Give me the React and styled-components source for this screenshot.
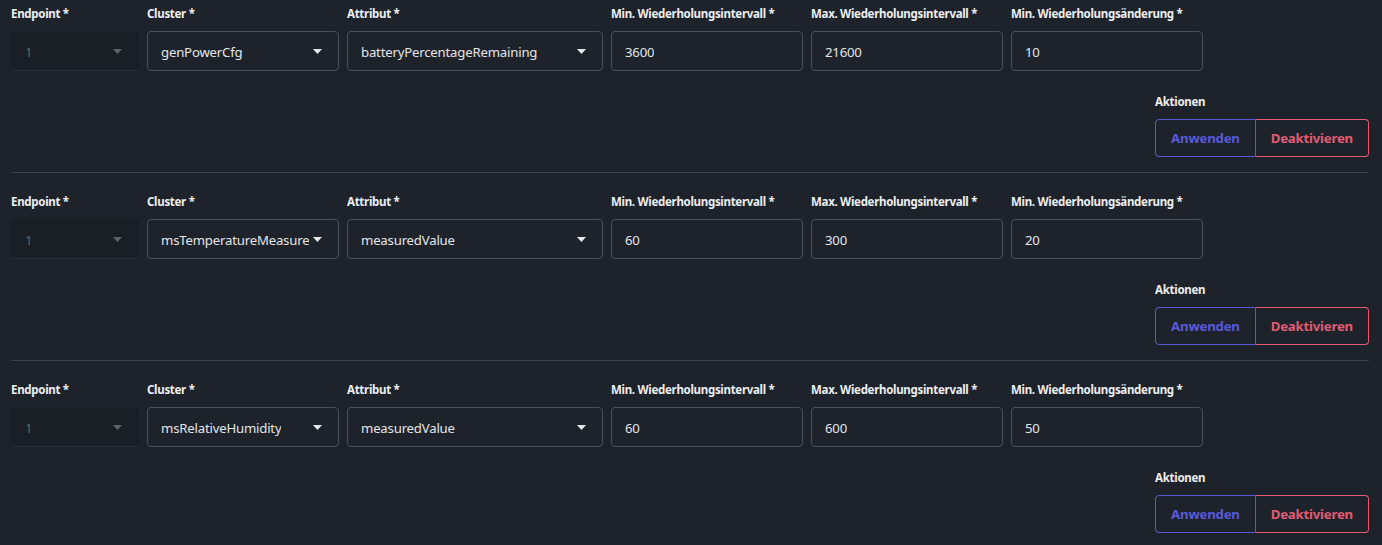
import React from "react";
import styled, { createGlobalStyle } from "styled-components";

const GlobalStyle = createGlobalStyle`
  body {
    margin: 0;
    background: #1e232b;
    font-family: "Noto Sans", "Open Sans", sans-serif;
  }
`;

const rows = [
    { cluster: "genPowerCfg", attribute: "batteryPercentageRemaining", min: "3600", max: "21600", change: "10" },
    { cluster: "msTemperatureMeasurement", attribute: "measuredValue", min: "60", max: "300", change: "20" },
    { cluster: "msRelativeHumidity", attribute: "measuredValue", min: "60", max: "600", change: "50" },
];

const Arrow = ({ muted }) => (
    <svg width="9" height="5" viewBox="0 0 9 5">
        <path d="M0 0 L9 0 L4.5 5 Z" fill={muted ? "#5d6269" : "#e6e8ea"} />
    </svg>
);

const App = () => {
    return (
        <Page>
            <GlobalStyle />
            {rows.map((row, i) => (
                <Section key={i} $last={i === rows.length - 1}>
                    <Fields>
                        <Field $w={128}>
                            <Label>Endpoint *</Label>
                            <Select $disabled>
                                <Value $muted>1</Value>
                                <Arrow muted />
                            </Select>
                        </Field>
                        <Field $w={192}>
                            <Label>Cluster *</Label>
                            <Select>
                                <Value>{row.cluster}</Value>
                                <Arrow />
                            </Select>
                        </Field>
                        <Field $w={256}>
                            <Label>Attribut *</Label>
                            <Select>
                                <Value>{row.attribute}</Value>
                                <Arrow />
                            </Select>
                        </Field>
                        <Field $w={192}>
                            <Label>Min. Wiederholungsintervall *</Label>
                            <Input><Value>{row.min}</Value></Input>
                        </Field>
                        <Field $w={192}>
                            <Label>Max. Wiederholungsintervall *</Label>
                            <Input><Value>{row.max}</Value></Input>
                        </Field>
                        <Field $w={192}>
                            <Label>Min. Wiederholungsänderung *</Label>
                            <Input><Value>{row.change}</Value></Input>
                        </Field>
                    </Fields>
                    <Actions>
                        <Label>Aktionen</Label>
                        <ButtonGroup>
                            <Button $color="#5a5ad8" $left>Anwenden</Button>
                            <Button $color="#e25b72">Deaktivieren</Button>
                        </ButtonGroup>
                    </Actions>
                </Section>
            ))}
        </Page>
    );
};

//styling
const Page = styled.div`
padding: 6px 13px 0 11px;
`
const Section = styled.div`
display: flex;
flex-direction: column;
padding-bottom: 15px;
margin-bottom: 21px;
border-bottom: ${p => p.$last ? "none" : "1px solid #3b4048"};
`
const Fields = styled.div`
display: flex;
gap: 8px;
`
const Field = styled.div`
display: flex;
flex-direction: column;
width: ${p => p.$w}px;
gap: 9px;
`
const Label = styled.div`
font-size: 11.5px;
font-weight: 700;
color: #eceef0;
line-height: 16px;
white-space: nowrap;
letter-spacing: -0.3px;
`
const Select = styled.div`
height: 40px;
box-sizing: border-box;
display: flex;
align-items: center;
justify-content: space-between;
padding: 0 16px 0 13px;
gap: 4px;
border-radius: 4px;
background: ${p => p.$disabled ? "#1a1e25" : "#1e232b"};
border: 1px solid ${p => p.$disabled ? "#1a1e25" : "#4b5058"};
border-bottom-color: ${p => p.$disabled ? "#2a2f37" : "#4b5058"};
svg { flex-shrink: 0; }
`
const Input = styled(Select)`
padding: 0 13px;
`
const Value = styled.span`
font-size: 13.2px;
color: ${p => p.$muted ? "#5f646b" : "#e3e5e8"};
white-space: nowrap;
overflow: hidden;
min-width: 0;
letter-spacing: -0.2px;
padding-top: 1px;
`
const Actions = styled.div`
align-self: flex-end;
display: flex;
flex-direction: column;
gap: 9px;
margin-top: 23px;
`
const ButtonGroup = styled.div`
display: flex;
`
const Button = styled.button`
height: 38px;
padding: 0 15px;
background: transparent;
border: 1px solid ${p => p.$color};
color: ${p => p.$color};
font-family: "Noto Sans", "Open Sans", sans-serif;
font-size: 13.2px;
font-weight: 700;
letter-spacing: -0.2px;
border-radius: ${p => p.$left ? "4px 0 0 4px" : "0 4px 4px 0"};
border-left-width: ${p => p.$left ? "1px" : "0"};
`
export default App;
